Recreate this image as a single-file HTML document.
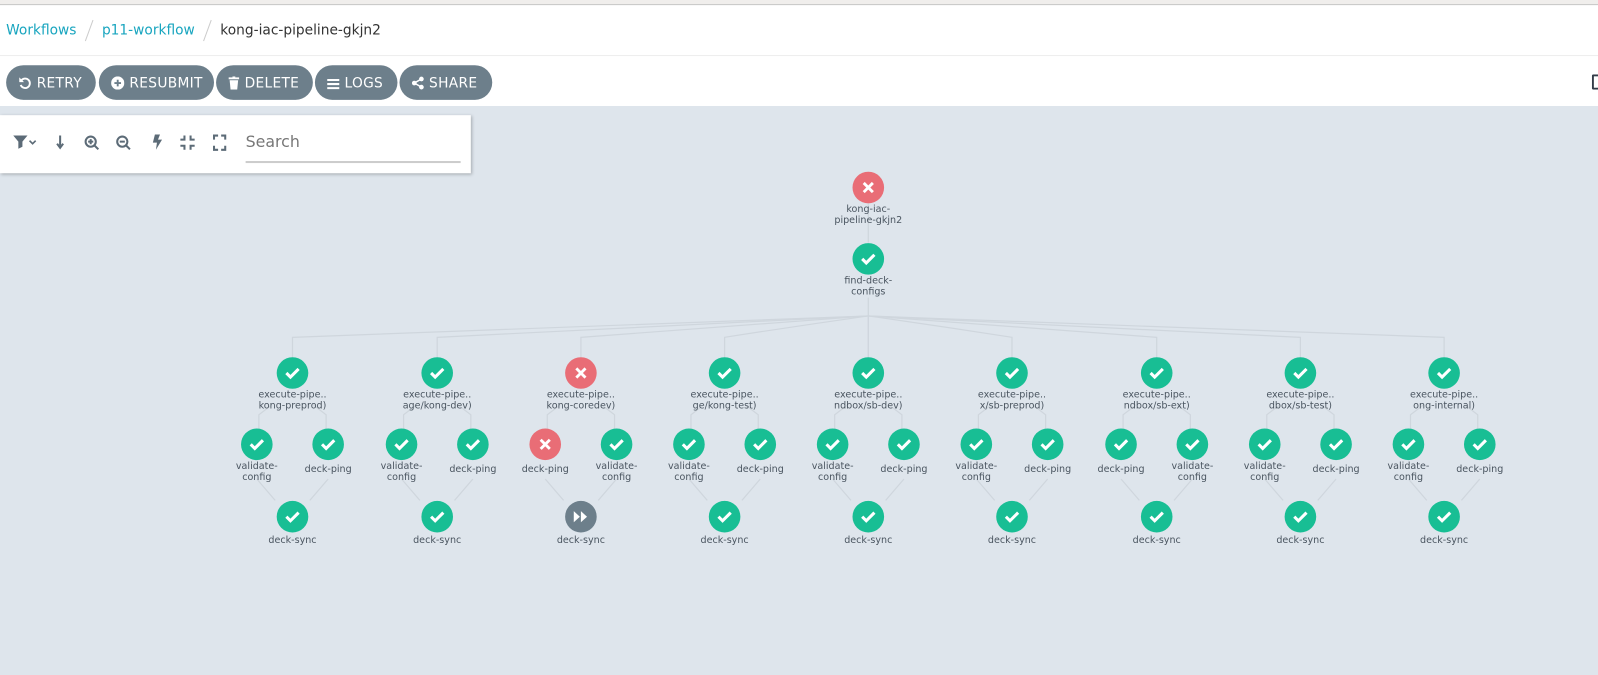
<!DOCTYPE html>
<html><head><meta charset="utf-8"><style>
*{box-sizing:border-box;margin:0;padding:0}
html,body{width:1598px;height:675px;overflow:hidden;background:#dee5ec}
#wrap{width:1568px;height:663px;position:relative;transform:scale(1.01913);transform-origin:0 0;font-family:"Liberation Sans","DejaVu Sans",sans-serif;background:#dee5ec;overflow:hidden}
.top{position:absolute;left:0;top:0;width:1568px;height:104px;background:#fff}
.gl{position:absolute;left:0;top:0;width:1568px;height:5px;background:#f0eeec;border-bottom:1px solid #c8c8c8}
.bc{position:absolute;top:19px;left:6px;font-size:13.5px;font-family:"DejaVu Sans",sans-serif;color:#333;white-space:nowrap}
.bc a{color:#18a5bf;text-decoration:none}
.sep{display:inline-block;width:1px;height:22px;background:#ccc;transform:rotate(20deg);margin:0 12px;vertical-align:middle}
.hl{position:absolute;top:54px;left:0;width:1568px;height:1px;background:#eee}
.btn{position:absolute;top:64px;height:34px;border-radius:17px;background:#6d7f8b;color:#fff;font-family:"DejaVu Sans",sans-serif;font-size:13.5px;line-height:36px;padding-left:12px;letter-spacing:.3px}
.btn svg{vertical-align:-2px;margin-right:5px}
.panel{position:absolute;left:0;top:113px;width:462px;height:57px;background:#fff;box-shadow:1px 1px 3px rgba(0,0,0,.25)}
.search{position:absolute;left:241px;top:130px;font-family:"DejaVu Sans",sans-serif;font-size:15.5px;color:#777}
.sline{position:absolute;left:241px;top:158px;width:211px;height:2px;background:#ccc}
svg.g{position:absolute;left:0;top:0}
svg.g text{font-family:"DejaVu Sans",sans-serif;font-size:9.4px;fill:#4a5560;text-anchor:middle}
</style></head><body><div id="wrap">
<div class="top"></div><div class="gl"></div>
<div class="bc"><a>Workflows</a><span class="sep"></span><a>p11-workflow</a><span class="sep"></span>kong-iac-pipeline-gkjn2</div>
<div class="hl"></div>
<div class="btn" style="left:6px;width:88px"><svg width="13" height="13" viewBox="0 0 14 14"><path d="M3 4.5A5 5 0 1 1 2.5 9" fill="none" stroke="#fff" stroke-width="2"/><path d="M1 1v5h5z" fill="#fff"/></svg>RETRY</div>
<div class="btn" style="left:97px;width:113px"><svg width="13" height="13" viewBox="0 0 14 14"><circle cx="7" cy="7" r="7" fill="#fff"/><path d="M7 3.5v7M3.5 7h7" stroke="#6d7f8b" stroke-width="2"/></svg>RESUBMIT</div>
<div class="btn" style="left:212px;width:95px"><svg width="11" height="13" viewBox="0 0 11 14"><rect x="0" y="1" width="11" height="2" fill="#fff"/><rect x="4" y="0" width="3" height="2" fill="#fff"/><path d="M1 4h9l-1 10H2z" fill="#fff"/></svg>DELETE</div>
<div class="btn" style="left:309px;width:81px"><svg width="12" height="11" viewBox="0 0 12 11"><path d="M0 1.5h12M0 5.5h12M0 9.5h12" stroke="#fff" stroke-width="2"/></svg>LOGS</div>
<div class="btn" style="left:392px;width:91px"><svg width="12" height="13" viewBox="0 0 12 13"><circle cx="9.5" cy="2.5" r="2.3" fill="#fff"/><circle cx="2.5" cy="6.5" r="2.3" fill="#fff"/><circle cx="9.5" cy="10.5" r="2.3" fill="#fff"/><path d="M9.5 2.5L2.5 6.5 9.5 10.5" stroke="#fff" stroke-width="1.5" fill="none"/></svg>SHARE</div>
<div style="position:absolute;left:1562px;top:73px;width:8px;height:15px;border:2.5px solid #333c48;border-right:none;border-radius:2px 0 0 2px"></div>
<div class="panel"></div>
<svg class="g" width="470" height="170">
<g fill="#5c6b77">
<path d="M13 133h14l-5 6v5l-4 2v-7z"/><path d="M29 138l3 3 3-3" stroke="#5c6b77" stroke-width="1.6" fill="none"/>
<path d="M59 133v10M56 141l3 4 3-4" stroke="#5c6b77" stroke-width="2" fill="none"/>
<circle cx="89" cy="139" r="5" fill="none" stroke="#5c6b77" stroke-width="2"/><path d="M92.5 142.5l4 4M86.5 139h5M89 136.5v5" stroke="#5c6b77" stroke-width="2"/>
<circle cx="120" cy="139" r="5" fill="none" stroke="#5c6b77" stroke-width="2"/><path d="M123.5 142.5l4 4M117.5 139h5" stroke="#5c6b77" stroke-width="2"/>
<path d="M152 132h5l-2 5h4l-6 10 1-7h-4z"/>
<path d="M181 133v4h-4M187 133v4h4M181 147v-4h-4M187 147v-4h4" stroke="#5c6b77" stroke-width="2" fill="none"/>
<path d="M210 137v-4h4M221 137v-4h-4M210 143v4h4M221 143v4h-4" stroke="#5c6b77" stroke-width="2" fill="none"/>
</g></svg>
<div class="search">Search</div><div class="sline"></div>
<svg class="g" id="g" width="1568" height="663"></svg>
</div>
<script>
const g=document.getElementById('g');let h='';
const cols=[287,429,570,711,852,993,1135,1276,1417];
const sub=['kong-preprod)','age/kong-dev)','kong-coredev)','ge/kong-test)','ndbox/sb-dev)','x/sb-preprod)','ndbox/sb-ext)','dbox/sb-test)','ong-internal)'];
const L='stroke="#cfd6dd" stroke-width="1.2" fill="none"';
function ok(x,y){return `<circle cx="${x}" cy="${y}" r="15.5" fill="#18be94"/><path d="M${x-6} ${y}l4 4 8-8" stroke="#fff" stroke-width="3" fill="none"/>`}
function bad(x,y){return `<circle cx="${x}" cy="${y}" r="15.5" fill="#e96d76"/><path d="M${x-4.5} ${y-4.5}l9 9M${x+4.5} ${y-4.5}l-9 9" stroke="#fff" stroke-width="2.8"/>`}
function skip(x,y){return `<circle cx="${x}" cy="${y}" r="15.5" fill="#6d7f8b"/><path d="M${x-7} ${y-5.5}v11l6-5.5zM${x} ${y-5.5}v11l6-5.5z" fill="#fff"/>`}
function t(x,y,s){return `<text x="${x}" y="${y}">${s}</text>`}
h+=`<path d="M852 200v38M852 292v59" ${L}/>`;
cols.forEach(c=>{h+=`<path d="M852 310Q${(852+c)/2} 320 ${c} 331v20" ${L}/>`;
h+=`<path d="M${c-20} 397l-13 10v14M${c+20} 397l13 10v14M${c-35} 470l18 21M${c+35} 470l-18 21" ${L}/>`;});
h+=bad(852,184)+t(852,208,'kong-iac-')+t(852,219,'pipeline-gkjn2');
h+=ok(852,254)+t(852,278,'find-deck-')+t(852,289,'configs');
cols.forEach((c,i)=>{
 h+=(i==2?bad:ok)(c,366)+t(c,390,'execute-pipe..')+t(c,401,sub[i]);
 const dpLeft=(i==2||i==6);
 const lx=c-35,rx=c+35;
 if(dpLeft){h+=(i==2?bad:ok)(lx,436)+t(lx,463,'deck-ping');h+=ok(rx,436)+t(rx,460,'validate-')+t(rx,471,'config');}
 else{h+=ok(lx,436)+t(lx,460,'validate-')+t(lx,471,'config');h+=ok(rx,436)+t(rx,463,'deck-ping');}
 h+=(i==2?skip:ok)(c,507)+t(c,533,'deck-sync');
});
g.innerHTML=h;
</script>
</body></html>
